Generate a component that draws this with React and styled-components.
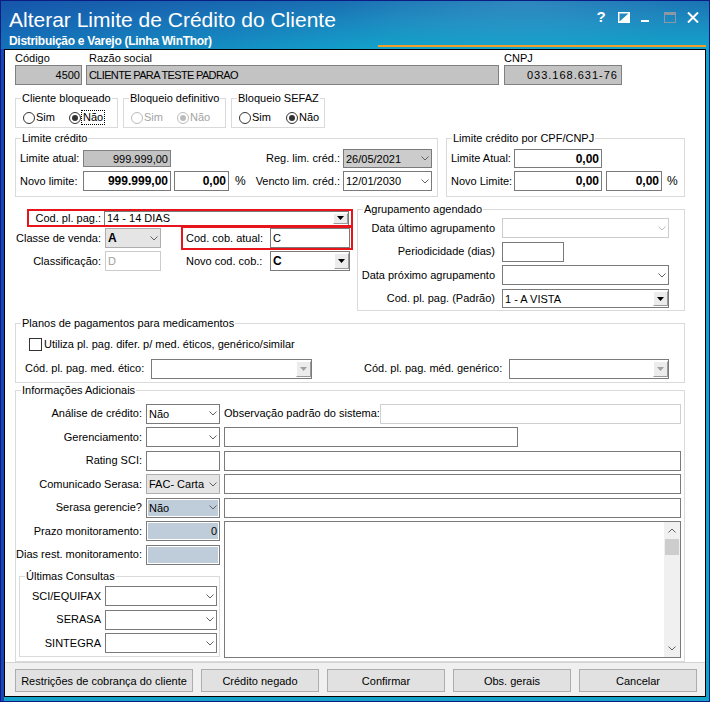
import React from "react";
import styled, { createGlobalStyle } from "styled-components";

const GlobalStyle = createGlobalStyle`
  html, body { margin: 0; padding: 0; background: #fff; }
  body { font-family: "Liberation Sans", Arial, sans-serif; font-size: 11px; color: #000; }
  * { box-sizing: border-box; }
`;

const VARIANTS = {
  white: { bg: "#ffffff", border: "#7a7a7a", color: "#000" },
  ro: { bg: "#c3c3c3", border: "#808080", color: "#000" },
  gray: { bg: "#cccccc", border: "#7a7a7a", color: "#000" },
  light: { bg: "#e5e5e5", border: "#adadad", color: "#000" },
  blue: { bg: "#bfcddb", border: "#7a7a7a", color: "#000" },
  dis: { bg: "#ffffff", border: "#cccccc", color: "#a0a0a0" },
  soft: { bg: "#ffffff", border: "#cfcfcf", color: "#000" },
};
const v = (p) => VARIANTS[p.$v || "white"];

const Window = styled.div`
  width: 710px;
  height: 702px;
  display: flex;
  flex-direction: column;
  background: linear-gradient(90deg, #1b44b4 0, #1b44b4 3px, #15a2c9 3px);
  border: 1px solid #0b1c82;
  overflow: hidden;
`;

const TitleBar = styled.div`
  position: relative;
  height: 48px;
  flex: none;
  display: flex;
  justify-content: space-between;
  padding-left: 8px;
  color: #fff;
  background:
    radial-gradient(ellipse 260px 70px at 520px 2px, rgba(120, 200, 230, 0.22), rgba(120, 200, 230, 0) 70%),
    linear-gradient(100deg, rgba(18, 50, 160, 0.45) 0%, rgba(18, 50, 160, 0) 55%),
    linear-gradient(180deg, #1a73b3 0%, #1a8bc0 45%, #13a4cb 100%);
  &::after {
    content: "";
    position: absolute;
    left: 377px;
    right: 3px;
    bottom: 2px;
    height: 2px;
    background: #f0a02a;
  }
`;

const TitleTexts = styled.div`
  display: flex;
  flex-direction: column;
`;

const Title = styled.div`
  margin-top: 7px;
  font-size: 21px;
  line-height: 24px;
  white-space: nowrap;
`;

const Subtitle = styled.div`
  margin-top: 2px;
  font-size: 12px;
  line-height: 14px;
  font-weight: 700;
  letter-spacing: -0.3px;
  white-space: nowrap;
`;

const Controls = styled.div`
  display: flex;
  align-items: flex-start;
  padding: 10px 10px 0 0;
`;

const Ctl = styled.div`
  width: ${(p) => p.$w}px;
  height: 12px;
  margin-left: ${(p) => p.$ml || 0}px;
  display: flex;
  align-items: center;
  justify-content: center;
  font-weight: 700;
  font-size: 15px;
  line-height: 12px;
`;

const Client = styled.div`
  flex: 1;
  margin: 0 3px 4px 3px;
  border: 1px solid #000;
  background: #fff;
  display: flex;
  flex-direction: column;
  min-height: 0;
`;

const Form = styled.div`
  flex: 1;
  padding: 2px 0 0 10px;
  display: flex;
  flex-direction: column;
  min-height: 0;
`;

const Row = styled.div`
  display: flex;
  align-items: ${(p) => p.$align || "stretch"};
  margin-top: ${(p) => p.$mt || 0}px;
  gap: ${(p) => p.$gap || 0}px;
`;

const Col = styled.div`
  display: flex;
  flex-direction: column;
  width: ${(p) => p.$w}px;
  margin-left: ${(p) => p.$ml || 0}px;
  flex: none;
`;

const TopLabel = styled.div`
  height: 13px;
  line-height: 13px;
  padding-left: ${(p) => p.$pl || 0}px;
`;

const Box = styled.div`
  flex: ${(p) => (p.$w ? "none" : p.$grow ? "1 1 0" : "0 0 auto")};
  width: ${(p) => (p.$w ? `${p.$w}px` : "auto")};
  min-width: 0;
  height: ${(p) => p.$h || 20}px;
  margin-left: ${(p) => p.$ml || 0}px;
  border: 1px solid ${(p) => v(p).border};
  background: ${(p) => v(p).bg};
  color: ${(p) => v(p).color};
  box-shadow: ${(p) => (p.$v === "blue" ? "inset 0 0 0 1px #ffffff" : "none")};
  display: flex;
  align-items: center;
  justify-content: ${(p) => (p.$right ? "flex-end" : "flex-start")};
  padding: 0 ${(p) => (p.$pr !== undefined ? p.$pr : 2)}px 0 ${(p) => (p.$pl !== undefined ? p.$pl : 2)}px;
  font-weight: ${(p) => (p.$bold ? 700 : 400)};
  font-size: ${(p) => (p.$bold ? 12 : 11)}px;
  letter-spacing: ${(p) => p.$ls || 0}px;
  white-space: nowrap;
  overflow: hidden;
`;

const BoxText = styled.span`
  flex: 1;
  overflow: hidden;
  white-space: nowrap;
`;

const ChevronWrap = styled.span`
  flex: none;
  display: flex;
  margin: 0 2px 0 3px;
`;

const DropBtn = styled.span`
  flex: none;
  align-self: stretch;
  width: 15px;
  margin: 1px -1px 1px 2px;
  background: #ececec;
  border: 1px solid;
  border-color: #ffffff #9a9a9a #9a9a9a #ffffff;
  display: flex;
  align-items: center;
  justify-content: center;
`;

const Chevron = ({ color = "#606060", up }) => (
  <svg width="8" height="5" viewBox="0 0 8 5">
    <path
      d={up ? "M0.5 4.5 L4 1 L7.5 4.5" : "M0.5 0.5 L4 4 L7.5 0.5"}
      stroke={color}
      strokeWidth="1"
      fill="none"
    />
  </svg>
);

const Tri = ({ color = "#000" }) => (
  <svg width="7" height="4" viewBox="0 0 7 4">
    <path d="M0 0 H7 L3.5 4 Z" fill={color} />
  </svg>
);

const Combo = ({ children, chevron, ...rest }) => (
  <Box {...rest} $pr={0}>
    <BoxText>{children}</BoxText>
    <ChevronWrap>
      <Chevron color={chevron} />
    </ChevronWrap>
  </Box>
);

const Classic = ({ children, tri, ...rest }) => (
  <Box {...rest} $pr={1}>
    <BoxText>{children}</BoxText>
    <DropBtn>
      <Tri color={tri} />
    </DropBtn>
  </Box>
);

const Group = styled.fieldset`
  margin: ${(p) => p.$mt || 0}px 0 0 ${(p) => p.$ml || 0}px;
  padding: 0;
  border: 1px solid #dadada;
  width: ${(p) => p.$w}px;
  min-width: 0;
  flex: none;
`;

const Legend = styled.legend`
  margin-left: 5px;
  padding: 0 1px;
  line-height: 13px;
  font-size: 11px;
`;

const GroupBody = styled.div`
  padding: ${(p) => p.$p};
  display: flex;
  flex-direction: column;
  gap: ${(p) => p.$gap || 0}px;
`;

const RadioRow = styled.div`
  display: flex;
  height: 22px;
  padding: 6px 0 3px 7px;
`;

const RadioOpt = styled.label`
  display: flex;
  align-items: center;
  width: ${(p) => p.$w || 46}px;
  flex: none;
  color: ${(p) => (p.$dis ? "#a3a3a3" : "#000")};
  line-height: 13px;
`;

const RadioCircle = styled.span`
  width: 12px;
  height: 12px;
  border-radius: 50%;
  border: 1px solid ${(p) => (p.$dis ? "#bcbcbc" : "#333")};
  background: #fff;
  display: flex;
  align-items: center;
  justify-content: center;
  margin-right: 1px;
  &::after {
    content: "";
    width: 6px;
    height: 6px;
    border-radius: 50%;
    background: ${(p) => (p.$dis ? "#bcbcbc" : "#333")};
    display: ${(p) => (p.$on ? "block" : "none")};
  }
`;

const FocusText = styled.span`
  outline: 1px dotted #000;
  outline-offset: 0;
  padding: 0 1px;
`;

const Radio = ({ on, dis, focus, children, w }) => (
  <RadioOpt $dis={dis} $w={w}>
    <RadioCircle $on={on} $dis={dis} />
    {focus ? <FocusText>{children}</FocusText> : <span>{children}</span>}
  </RadioOpt>
);

const FormRow = styled.div`
  display: flex;
  align-items: center;
  height: ${(p) => p.$h || 20}px;
  margin-top: ${(p) => p.$mt || 0}px;
  margin-left: ${(p) => p.$ml || 0}px;
  width: ${(p) => (p.$w ? `${p.$w}px` : "auto")};
  outline: ${(p) => (p.$hl ? "2px solid #e8141c" : "none")};
`;

const Label = styled.div`
  flex: none;
  width: ${(p) => (p.$w ? `${p.$w}px` : "auto")};
  text-align: ${(p) => (p.$right ? "right" : "left")};
  margin-left: ${(p) => p.$ml || 0}px;
  margin-right: ${(p) => p.$mr || 0}px;
  white-space: nowrap;
  line-height: 13px;
  align-self: center;
`;

const Pct = styled.div`
  margin-left: ${(p) => p.$ml || 0}px;
  font-size: 12px;
`;

const Spacer = styled.div`
  flex: 1;
`;

const LeftBlock = styled.div`
  width: 339px;
  flex: none;
  padding-top: 8px;
  display: flex;
  flex-direction: column;
`;

const CobBlock = styled.div`
  flex: none;
  display: flex;
  align-items: center;
  width: 168px;
  height: 20px;
  margin-left: 22px;
  padding-left: 3px;
  outline: ${(p) => (p.$hl ? "2px solid #e8141c" : "none")};
`;

const CheckRow = styled.div`
  display: flex;
  align-items: center;
  height: 15px;
  margin-left: 4px;
`;

const CheckBox = styled.span`
  width: 13px;
  height: 13px;
  border: 1px solid #333;
  background: #fff;
  margin-right: 2px;
`;

const InfoGrid = styled.div`
  display: grid;
  grid-template-columns: 126px 74px 1fr;
  grid-template-rows: repeat(7, 20px) auto;
  column-gap: 4px;
  row-gap: 3.5px;
  padding: 7px 3px 4px 0;
`;

const GridLabel = styled.div`
  grid-column: 1;
  grid-row: ${(p) => p.$row};
  text-align: right;
  align-self: center;
  white-space: nowrap;
  line-height: 13px;
`;

const Cell = styled.div`
  grid-column: ${(p) => p.$col};
  grid-row: ${(p) => p.$row};
  display: flex;
  align-items: stretch;
  min-width: 0;
`;

const Memo = styled.div`
  grid-column: 3;
  grid-row: 6 / span 3;
  border: 1px solid #7a7a7a;
  background: #fff;
  display: flex;
  justify-content: flex-end;
  margin-bottom: -1px;
`;

const ScrollBar = styled.div`
  width: 16px;
  background: #f0f0f0;
  display: flex;
  flex-direction: column;
`;

const ScrollBtn = styled.div`
  height: 17px;
  display: flex;
  align-items: center;
  justify-content: center;
`;

const Thumb = styled.div`
  height: 16px;
  margin: 0 1px;
  background: #cdcdcd;
`;

const Track = styled.div`
  flex: 1;
`;

const UltGroup = styled(Group)`
  grid-column: 1 / span 2;
  margin: 2px 0 0 3px;
`;

const UltRow = styled.div`
  display: flex;
  align-items: center;
  height: 20px;
`;

const ButtonBar = styled.div`
  flex: none;
  height: 34px;
  border-top: 1px solid #d4d4d4;
  background: #f0f0f0;
  display: flex;
  gap: 8px;
  padding: 6px 0 0 10px;
`;

const Button = styled.div`
  width: ${(p) => p.$w || 118}px;
  height: 23px;
  background: #e1e1e1;
  border: 1px solid #adadad;
  display: flex;
  align-items: center;
  justify-content: center;
  white-space: nowrap;
`;

export default function App() {
  return (
    <>
      <GlobalStyle />
      <Window>
        <TitleBar>
          <TitleTexts>
            <Title>Alterar Limite de Crédito do Cliente</Title>
            <Subtitle>Distribuição e Varejo (Linha WinThor)</Subtitle>
          </TitleTexts>
          <Controls>
            <Ctl $w={8}>?</Ctl>
            <Ctl $w={12} $ml={13}>
              <svg width="12" height="11" viewBox="0 0 12 11">
                <rect x="0.75" y="0.75" width="10.5" height="9.5" fill="none" stroke="#fff" strokeWidth="1.5" />
                <path d="M11 1 L11 10 L1 10 Z" fill="#fff" />
              </svg>
            </Ctl>
            <Ctl $w={8} $ml={11}>
              <svg width="8" height="12" viewBox="0 0 8 12">
                <rect x="0" y="9" width="8" height="2" fill="#fff" />
              </svg>
            </Ctl>
            <Ctl $w={12} $ml={15}>
              <svg width="12" height="11" viewBox="0 0 12 11">
                <rect x="0.5" y="0.5" width="11" height="10" fill="none" stroke="#8c99a4" strokeWidth="1" />
                <rect x="0" y="0" width="12" height="3" fill="#8c99a4" />
              </svg>
            </Ctl>
            <Ctl $w={12} $ml={11}>
              <svg width="12" height="11" viewBox="0 0 12 11">
                <path d="M1 0.5 L11 10.5 M11 0.5 L1 10.5" stroke="#fff" strokeWidth="2" />
              </svg>
            </Ctl>
          </Controls>
        </TitleBar>

        <Client>
          <Form>
            <Row>
              <Col $w={67}>
                <TopLabel>Código</TopLabel>
                <Box $v="ro" $right $pr={1}>4500</Box>
              </Col>
              <Col $w={413} $ml={4}>
                <TopLabel $pl={3}>Razão social</TopLabel>
                <Box $v="ro" $ls={-0.65}>CLIENTE PARA TESTE PADRAO</Box>
              </Col>
              <Col $w={118} $ml={5}>
                <TopLabel>CNPJ</TopLabel>
                <Box $v="ro" $right $pr={3} $ls={1}>033.168.631-76</Box>
              </Col>
            </Row>

            <Row $mt={7} $gap={5}>
              <Group $w={103}>
                <Legend>Cliente bloqueado</Legend>
                <RadioRow>
                  <Radio>Sim</Radio>
                  <Radio on focus>Não</Radio>
                </RadioRow>
              </Group>
              <Group $w={103}>
                <Legend>Bloqueio definitivo</Legend>
                <RadioRow>
                  <Radio dis>Sim</Radio>
                  <Radio dis on>Não</Radio>
                </RadioRow>
              </Group>
              <Group $w={94}>
                <Legend>Bloqueio SEFAZ</Legend>
                <RadioRow>
                  <Radio w={47}>Sim</Radio>
                  <Radio on>Não</Radio>
                </RadioRow>
              </Group>
            </Row>

            <Row $mt={4} $gap={8}>
              <Group $w={423}>
                <Legend>Limite crédito</Legend>
                <GroupBody $p="4px 5px 5px 4px">
                  <FormRow $h={19}>
                    <Label $w={63}>Limite atual:</Label>
                    <Box $w={88} $h={17} $v="ro" $right>999.999,00</Box>
                    <Spacer />
                    <Label $mr={3}>Reg. lim. créd.:</Label>
                    <Combo $w={89} $h={19} $v="gray">26/05/2021</Combo>
                  </FormRow>
                  <FormRow $mt={3}>
                    <Label $w={63}>Novo limite:</Label>
                    <Box $w={88} $right $bold>999.999,00</Box>
                    <Box $w={55} $ml={3} $right $bold>0,00</Box>
                    <Pct $ml={6}>%</Pct>
                    <Spacer />
                    <Label $mr={3}>Vencto lim. créd.:</Label>
                    <Combo $w={89}>12/01/2030</Combo>
                  </FormRow>
                </GroupBody>
              </Group>
              <Group $w={239}>
                <Legend>Limite crédito por CPF/CNPJ</Legend>
                <GroupBody $p="4px 5px 5px 4px">
                  <FormRow $h={19}>
                    <Label $w={63}>Limite Atual:</Label>
                    <Box $w={88} $h={19} $right $bold>0,00</Box>
                  </FormRow>
                  <FormRow $mt={3}>
                    <Label $w={63}>Novo Limite:</Label>
                    <Box $w={88} $right $bold>0,00</Box>
                    <Box $w={56} $ml={4} $right $bold>0,00</Box>
                    <Pct $ml={5}>%</Pct>
                  </FormRow>
                </GroupBody>
              </Group>
            </Row>

            <Row $mt={6}>
              <LeftBlock>
                <FormRow $h={14} $ml={14} $w={322} $hl>
                  <Label $w={72} $right>Cod. pl. pag.:</Label>
                  <Classic $w={245} $h={15} $ml={3}>14 - 14 DIAS</Classic>
                </FormRow>
                <FormRow $mt={3}>
                  <Label $w={86} $right>Classe de venda:</Label>
                  <Combo $w={56} $ml={4} $v="light" $bold>A</Combo>
                  <CobBlock $hl>
                    <Label $w={84}>Cod. cob. atual:</Label>
                    <Box $w={80}>C</Box>
                  </CobBlock>
                </FormRow>
                <FormRow $mt={3}>
                  <Label $w={86} $right>Classificação:</Label>
                  <Box $w={56} $ml={4} $v="dis">D</Box>
                  <CobBlock>
                    <Label $w={84}>Novo cod. cob.:</Label>
                    <Classic $w={80} $bold>C</Classic>
                  </CobBlock>
                </FormRow>
              </LeftBlock>
              <Group $w={328} $ml={3}>
                <Legend>Agrupamento agendado</Legend>
                <GroupBody $p="2px 15px 1px 0" $gap={3.5}>
                  <FormRow>
                    <Label $w={137} $right $mr={7}>Data último agrupamento</Label>
                    <Combo $w={167} $v="dis" chevron="#bcbcbc"></Combo>
                  </FormRow>
                  <FormRow>
                    <Label $w={137} $right $mr={7}>Periodicidade (dias)</Label>
                    <Box $w={62}></Box>
                  </FormRow>
                  <FormRow>
                    <Label $w={137} $right $mr={7}>Data próximo agrupamento</Label>
                    <Combo $w={167}></Combo>
                  </FormRow>
                  <FormRow>
                    <Label $w={137} $right $mr={7}>Cod. pl. pag. (Padrão)</Label>
                    <Classic $w={167} $h={19}>1 - A VISTA</Classic>
                  </FormRow>
                </GroupBody>
              </Group>
            </Row>

            <Group $w={670} $mt={6}>
              <Legend>Planos de pagamentos para medicamentos</Legend>
              <GroupBody $p="7px 0 3px 9px">
                <CheckRow>
                  <CheckBox />
                  <span>Utiliza pl. pag. difer. p/ med. éticos, genérico/similar</span>
                </CheckRow>
                <FormRow $mt={7}>
                  <Label $w={126}>Cód. pl. pag. med. ético:</Label>
                  <Classic $w={161} tri="#a0a0a0"></Classic>
                  <Label $w={145} $ml={52}>Cód. pl. pag. méd. genérico:</Label>
                  <Classic $w={160} tri="#a0a0a0"></Classic>
                </FormRow>
              </GroupBody>
            </Group>

            <Group $w={670} $mt={1}>
              <Legend>Informações Adicionais</Legend>
              <InfoGrid>
                <GridLabel $row={1}>Análise de crédito:</GridLabel>
                <Cell $col={2} $row={1}><Combo $grow>Não</Combo></Cell>
                <Cell $col={3} $row={1}>
                  <Label $mr={0}>Observação padrão do sistema:</Label>
                  <Box $grow $v="soft"></Box>
                </Cell>

                <GridLabel $row={2}>Gerenciamento:</GridLabel>
                <Cell $col={2} $row={2}><Combo $grow></Combo></Cell>
                <Cell $col={3} $row={2}><Box $w={294}></Box></Cell>

                <GridLabel $row={3}>Rating SCI:</GridLabel>
                <Cell $col={2} $row={3}><Box $grow></Box></Cell>
                <Cell $col={3} $row={3}><Box $grow></Box></Cell>

                <GridLabel $row={4}>Comunicado Serasa:</GridLabel>
                <Cell $col={2} $row={4}><Combo $grow $v="light">FAC- Carta</Combo></Cell>
                <Cell $col={3} $row={4}><Box $grow></Box></Cell>

                <GridLabel $row={5}>Serasa gerencie?</GridLabel>
                <Cell $col={2} $row={5}><Combo $grow $v="blue">Não</Combo></Cell>
                <Cell $col={3} $row={5}><Box $grow></Box></Cell>

                <GridLabel $row={6}>Prazo monitoramento:</GridLabel>
                <Cell $col={2} $row={6}><Box $grow $v="blue" $right>0</Box></Cell>

                <GridLabel $row={7}>Dias rest. monitoramento:</GridLabel>
                <Cell $col={2} $row={7}><Box $grow $v="blue"></Box></Cell>

                <Memo>
                  <ScrollBar>
                    <ScrollBtn><Chevron up /></ScrollBtn>
                    <Thumb />
                    <Track />
                    <ScrollBtn><Chevron /></ScrollBtn>
                  </ScrollBar>
                </Memo>

                <UltGroup $w={201}>
                  <Legend>Últimas Consultas</Legend>
                  <GroupBody $p="3px 2px 3px 0" $gap={3.5}>
                    <UltRow>
                      <Label $w={81} $right $mr={4}>SCI/EQUIFAX</Label>
                      <Combo $w={112}></Combo>
                    </UltRow>
                    <UltRow>
                      <Label $w={81} $right $mr={4}>SERASA</Label>
                      <Combo $w={112}></Combo>
                    </UltRow>
                    <UltRow>
                      <Label $w={81} $right $mr={4}>SINTEGRA</Label>
                      <Combo $w={112}></Combo>
                    </UltRow>
                  </GroupBody>
                </UltGroup>
              </InfoGrid>
            </Group>
          </Form>

          <ButtonBar>
            <Button $w={178}>Restrições de cobrança do cliente</Button>
            <Button>Crédito negado</Button>
            <Button>Confirmar</Button>
            <Button>Obs. gerais</Button>
            <Button>Cancelar</Button>
          </ButtonBar>
        </Client>
      </Window>
    </>
  );
}
